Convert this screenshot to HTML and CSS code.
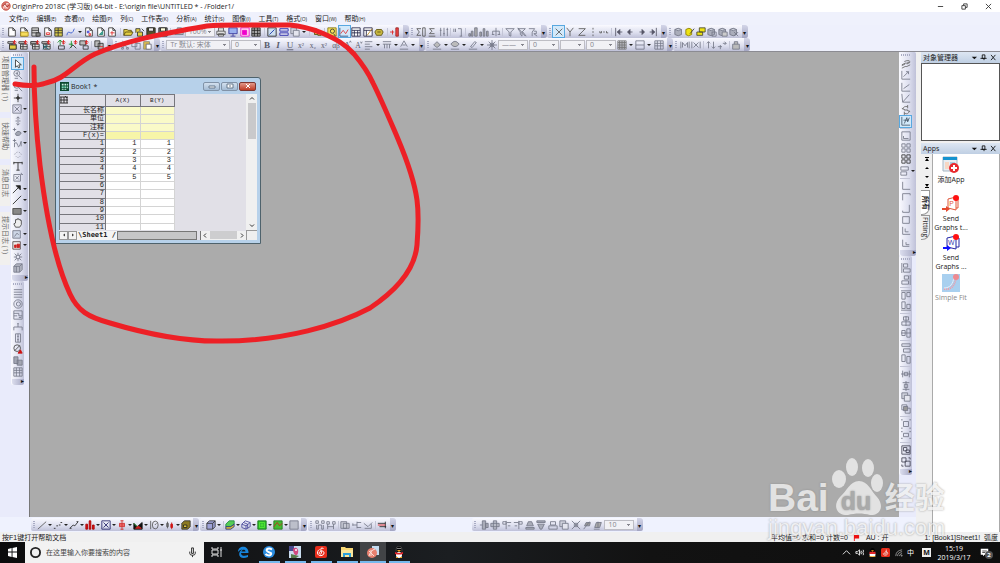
FILE: index.html
```html
<!DOCTYPE html>
<html lang="zh-CN">
<head>
  <meta charset="UTF-8" />
  <title>OriginPro 2018C</title>
  <link rel="stylesheet" href="styles.css">
</head>
<body>
  <header class="titlebar">
    <svg class="app-icon" viewBox="0 0 12 12"><circle cx="6" cy="6" r="5" fill="#e88a80" stroke="#b8352c"/><path d="M3 9c1-4 3-6 6-6M4 5l4 4M6 3v6" stroke="#fff" fill="none"/><path d="M2 6l3-3 2 4 3-2" stroke="#9c2820" fill="none"/></svg>
    <h1>OriginPro 2018C (学习版) 64-bit - E:\origin file\UNTITLED * - /Folder1/</h1>
    <div class="window-buttons">
      <button aria-label="Minimize"><svg viewBox="0 0 8 8"><path d="M1 4h6"/></svg></button>
      <button aria-label="Restore"><svg viewBox="0 0 8 8"><path d="M1 3h4v4H1zM3 3V1h4v4H5"/></svg></button>
      <button aria-label="Close"><svg viewBox="0 0 8 8"><path d="M1 1l6 6M7 1L1 7"/></svg></button>
    </div>
  </header>

  <nav class="menu">
    <a href="#">文件<small>(F)</small></a>
    <a href="#">编辑<small>(E)</small></a>
    <a href="#">查看<small>(V)</small></a>
    <a href="#">绘图<small>(P)</small></a>
    <a href="#">列<small>(C)</small></a>
    <a href="#">工作表<small>(K)</small></a>
    <a href="#">分析<small>(A)</small></a>
    <a href="#">统计<small>(S)</small></a>
    <a href="#">图像<small>(I)</small></a>
    <a href="#">工具<small>(T)</small></a>
    <a href="#">格式<small>(O)</small></a>
    <a href="#">窗口<small>(W)</small></a>
    <a href="#">帮助<small>(H)</small></a>
  </nav>

  <div class="bar-row">
    <div class="toolbar t-standard">
      <span class="icons" data-icons="page folder-page book page-red sheet curve+ page-multi page-green page-plus | open open-box save save-as | printer-dim"></span>
      <select class="zoom" aria-label="缩放"><option>100%</option></select>
      <span class="icons" data-icons="printer screen pink film | edit-win rows dup+ | tree | find chart* table table-edit gear | add-col"></span>
    </div>
    <div class="toolbar t-column">
      <span class="icons" data-icons="sum-col sum sliders | num | bars-up bars tree-dim | funnel funnel-x funnel-r"></span>
    </div>
    <div class="toolbar t-plot">
      <span class="icons" data-icons="X* Y Z dots dash | first prev next last"></span>
    </div>
    <div class="toolbar t-db">
      <span class="icons" data-icons="db-dim db-edit db-open db-grid db-save db-x"></span>
    </div>
  </div>

  <div class="bar-row second">
    <div class="toolbar t-import">
      <span class="icons" data-icons="imp-folder imp-1 imp-2 imp-x | imp-g1 imp-g2 imp-g3 | imp-copy"></span>
    </div>
    <div class="toolbar t-edit">
      <span class="icons" data-icons="cut copy paste"></span>
    </div>
    <div class="toolbar t-format">
      <select class="font" aria-label="字体"><option>Tr 默认: 宋体</option></select>
      <select class="size" aria-label="字号"><option>0</option></select>
      <span class="icons" data-icons="B I U sup subs supsub greek bigA smallA align+ merge+ colorA+"></span>
    </div>
    <div class="toolbar t-style">
      <span class="icons" data-icons="bucket+ palette+ pen+ sun"></span>
      <select class="line" aria-label="线型"><option>——</option></select>
      <select class="size" aria-label="线宽"><option>0</option></select>
      <select class="pattern" aria-label="图案"><option></option></select>
      <select class="size" aria-label="图案宽度"><option>0</option></select>
      <span class="icons" data-icons="fillgrid+ border+ grid"></span>
    </div>
    <div class="toolbar t-mask">
      <span class="icons" data-icons="mask mask-x | swap swap-h | lock"></span>
    </div>
  </div>

  <main class="body">
    <div class="dock">
      <div class="middle">
        <aside class="side-tabs">
          <button class="tall">项目管理器 (1)</button>
          <button>快速帮助</button>
          <button>消息日志</button>
          <button class="mid">提示日志 (1)</button>
        </aside>
        <div class="left-tools">
          <div class="toolbar vertical v-tools">
            <span class="icons" data-icons="pointer* zoomin zoomout cross mask-box+ vcross blob+ wave+ dotsel text region arrow+ line+ rect+ hand pic+ pic-red+ burst cube"></span>
          </div>
          <div class="toolbar vertical v-tools2">
            <span class="icons" data-icons="lines ring layout bracket axis no-red stack grid"></span>
          </div>
        </div>

        <section class="workspace">
          <article class="book">
            <div class="book-title">
              <svg class="book-icon" viewBox="0 0 10 10"><path d="M0 0h10v10H0z" fill="#0c4a30"/><path d="M2 2h2v2H2zM5 2h2v2H5zM8 2h1v2H8zM2 5h2v2H2zM5 5h2v2H5zM8 5h1v2H8zM2 8h2v1H2zM5 8h2v1H5z" fill="#c8f4e4"/><path d="M2 5h5v1H2z" fill="#25a878"/></svg>
              <h2>Book1 *</h2>
              <div class="book-buttons">
                <button aria-label="Minimize book"><svg viewBox="0 0 8 6"><path d="M1 3h6v2H1z"/></svg></button>
                <button aria-label="Maximize book"><svg viewBox="0 0 8 6"><path d="M1 1h6v4H1zM3 3h2"/></svg></button>
                <button class="close" aria-label="Close book"><svg viewBox="0 0 8 6"><path d="M2 1l4 4M6 1L2 5"/></svg></button>
              </div>
            </div>
            <div class="book-body">
              <div class="sheet">
                <table>
                  <thead>
                    <tr><th class="corner"><svg viewBox="0 0 8 8"><path d="M0 1h8M0 4h8M0 7h8M1 1v6M4 1v6M7 1v6M5 0l2 2"/></svg></th><th>A(X)</th><th>B(Y)</th></tr>
                  </thead>
                  <tbody>
                    <tr class="meta"><th>长名称</th><td></td><td></td></tr>
                    <tr class="meta"><th>单位</th><td></td><td></td></tr>
                    <tr class="meta"><th>注释</th><td></td><td></td></tr>
                    <tr class="meta formula"><th>F(x)=</th><td></td><td></td></tr>
                    <tr><th>1</th><td>1</td><td>1</td></tr>
                    <tr><th>2</th><td>2</td><td>2</td></tr>
                    <tr><th>3</th><td>3</td><td>3</td></tr>
                    <tr><th>4</th><td>4</td><td>4</td></tr>
                    <tr><th>5</th><td>5</td><td>5</td></tr>
                    <tr><th>6</th><td></td><td></td></tr>
                    <tr><th>7</th><td></td><td></td></tr>
                    <tr><th>8</th><td></td><td></td></tr>
                    <tr><th>9</th><td></td><td></td></tr>
                    <tr><th>10</th><td></td><td></td></tr>
                    <tr><th>11</th><td></td><td></td></tr>
                  </tbody>
                </table>
                <div class="vscroll">
                  <svg viewBox="0 0 8 8"><path d="M2 5l2-2 2 2"/></svg>
                  <span class="thumb"></span>
                  <svg class="down" viewBox="0 0 8 8"><path d="M2 3l2 2 2-2"/></svg>
                </div>
              </div>
              <div class="sheet-tabs">
                <button aria-label="Previous sheet"><svg viewBox="0 0 8 8"><path d="M5 2L3 4l2 2z"/></svg></button>
                <button aria-label="Next sheet"><svg viewBox="0 0 8 8"><path d="M3 2l2 2-2 2z"/></svg></button>
                <span class="tab">\Sheet1 /</span>
                <span class="filler"></span>
                <div class="hscroll">
                  <svg viewBox="0 0 8 8"><path d="M5 2L3 4l2 2"/></svg>
                  <span class="thumb"></span>
                  <svg viewBox="0 0 8 8"><path d="M3 2l2 2-2 2"/></svg>
                </div>
                <span class="resize"></span>
              </div>
            </div>
          </article>
        </section>

        <div class="right-tools">
          <div class="toolbar vertical v-graph">
            <span class="icons" data-icons="slashes axes1 axes2 axes3 recycle rescale* | layer1 layer4 layer4b layer-add+ | ax-l ax-t ax-r ax-box ax-in ax-in2"></span>
          </div>
          <div class="toolbar vertical v-align">
            <span class="icons" data-icons="al-l al-r | al-t al-b | al-h al-v | same-w same-h | dist-h dist-v front back | group ungroup | sel1 sel2"></span>
          </div>
        </div>
      </div>

      <div class="bottom">
        <div class="toolbar b-2d">
          <span class="icons" data-icons="line-g+ scatter+ linesym+ column+ multi+ box+ area+ polar+ stock+ template"></span>
        </div>
        <div class="toolbar b-3d">
          <span class="icons" data-icons="cube3d+ | surf+ wire+ contour+ image+ profile"></span>
        </div>
        <div class="toolbar b-mask">
          <span class="icons" data-icons="mask-pts mask-pts2 | mask-db node1 node2 | node-red"></span>
        </div>
        <div class="toolbar b-arrange">
          <span class="icons" data-icons="ar-1 ar-2 ar-3 ar-4 ar-5 ar-6 ar-7 front ar-8 rot1 rot2"></span>
          <select class="size" aria-label="角度"><option>10</option></select>
        </div>
      </div>
    </div>

    <aside class="panels">
      <section class="panel">
        <h3>对象管理器<svg viewBox="0 0 30 8"><path d="M1 3h6L4 6z" fill="#111"/><path d="M13 1h3v4h-3zM11 5h7M15 5v2M23 1l5 6M28 1l-5 6" stroke="#111" fill="none"/></svg></h3>
        <div class="objects"></div>
      </section>
      <section class="panel apps">
        <h3>Apps<svg viewBox="0 0 30 8"><path d="M1 3h6L4 6z" fill="#111"/><path d="M13 1h3v4h-3zM11 5h7M15 5v2M23 1l5 6M28 1l-5 6" stroke="#111" fill="none"/></svg></h3>
        <div class="apps-body">
          <div class="apps-tabs">
            <button aria-label="Top"><svg viewBox="0 0 6 6"><path d="M1 1h4v1H1zM3 2l2 3H1z"/></svg></button>
            <button aria-label="Up"><svg viewBox="0 0 6 6"><path d="M3 2l2 2H1z"/></svg></button>
            <button aria-label="Down"><svg viewBox="0 0 6 6"><path d="M3 4L1 2h4z"/></svg></button>
            <button aria-label="Bottom"><svg viewBox="0 0 6 6"><path d="M1 5h4V4H1zM3 4L1 1h4z"/></svg></button>
            <a class="vtab current" href="#">所有</a>
            <a class="vtab" href="#">Fitting</a>
          </div>
          <div class="app-list">
            <a href="#">
              <svg viewBox="0 0 18 18"><path d="M1 1h14v14H1z" fill="#e7eef3" stroke="#a7b7c3"/><path d="M1 1h14v3H1z" fill="#1593cf"/><path d="M3 6h4v7H3z" fill="#f7d7c4"/><path d="M8 6h5v3H8z" fill="#a8cfe2"/><circle cx="12" cy="12" r="5" fill="#e92a2f"/><path d="M9 12h6M12 9v6" stroke="#fff" stroke-width="2"/></svg>
              添加App
            </a>
            <a href="#">
              <svg viewBox="0 0 18 18"><path d="M6 4l8-2v13l-8-2zM14 4h2v9h-2" fill="#fff" stroke="#e0563a"/><text x="7" y="11" font-size="8" fill="#e0563a">P</text><circle cx="14" cy="3" r="3" fill="#f11"/><path d="M0 13h4v-2l4 3-4 3v-2H0z" fill="#e34a2f"/></svg>
              Send<br>Graphs t...
            </a>
            <a href="#">
              <svg viewBox="0 0 18 18"><path d="M5 4l9-2v13l-9-2zM14 4h3v9h-3" fill="#fff" stroke="#2528a6"/><text x="6" y="11" font-size="7" fill="#2528a6">W</text><circle cx="14" cy="3" r="3" fill="#f11"/><path d="M1 13h4v-2l4 3-4 3v-2H1z" fill="#11f"/></svg>
              Send<br>Graphs ...
            </a>
            <a href="#" class="dim">
              <svg viewBox="0 0 18 18"><path d="M0 0h18v18H0z" fill="#a9d0ef"/><path d="M2 15c7 1 11-3 12-12" fill="none" stroke="#f49aa4" stroke-width="2" stroke-dasharray="1 1"/><path d="M2 14c6 0 9-4 10-11" fill="none" stroke="#e5eef8"/><circle cx="14" cy="3" r="3" fill="#ee8a91"/></svg>
              Simple Fit
            </a>
          </div>
        </div>
      </section>
    </aside>
  </main>

  <footer class="status">
    <span class="help">按F1键打开帮助文档</span>
    <span>平均值=0 求和=0 计数=0</span>
    <svg viewBox="0 0 8 8"><path d="M1 1h6v4H2v3H1z" fill="#e11"/></svg>
    <span class="au">AU : 开</span>
    <span class="book-ref">1: [Book1]Sheet1!&nbsp; 弧度</span>
  </footer>

  <div class="taskbar">
    <button class="start" aria-label="开始"><svg viewBox="0 0 10 10"><path d="M0 1l4-1v4H0zM5 0l5-1v5H5zM0 5h4v5L0 9zM5 5h5v6l-5-1z"/></svg></button>
    <label class="search">
      <svg viewBox="0 0 12 12"><circle cx="6" cy="6" r="5" stroke-width="2"/></svg>
      <input type="text" placeholder="在这里输入你要搜索的内容" aria-label="搜索">
      <svg class="mic" viewBox="0 0 12 12"><path d="M5 1h2v6H5zM3 5v2q0 2 3 2t3-2V5M6 9v2"/></svg>
    </label>
    <div class="tasks">
      <button aria-label="任务视图"><svg viewBox="0 0 12 12"><path d="M1 1v2h6V1M1 11V9h6v2M1 4h6v4H1zM10 1v10M9 4h2" fill="none" stroke="#ddd"/></svg></button>
      <button aria-label="Edge"><svg viewBox="0 0 12 12"><path d="M1 6C1-1 12-1 11.500 7H4c0 3 4 3.500 7 2v2C5 13.500 1 11 2.500 6.500 3 5 4 4 5.500 3.500 3.500 3.500 2 4.500 1 6zM4.500 5.500H8.500C8.500 3 5 3 4.500 5.500z" fill="#1785dc"/></svg></button>
      <button class="open" aria-label="搜狗"><svg viewBox="0 0 12 12"><circle cx="6" cy="6" r="6" fill="#2b8de0"/><path d="M9 3.500C6 1.500 2.500 3 4 5s5 1 4 3.500C7 10 4 9.500 2.500 8" fill="none" stroke="#fff" stroke-width="2"/></svg></button>
      <button class="open" aria-label="照片"><svg viewBox="0 0 12 12"><path d="M0 0h12v12H0z" fill="#c9dcee"/><path d="M0 0h5v5H0z" fill="#4a4b8d"/><path d="M4 3c3-3 6 0 5 4s-5 2-5-4z" fill="#d24a80"/><path d="M2 8l8 2-3 2H2z" fill="#587a4a"/><circle cx="7" cy="4" r="1" fill="#fff"/></svg></button>
      <button class="open" aria-label="网易云音乐"><svg viewBox="0 0 12 12"><rect width="12" height="12" rx="2" fill="#e72d1b"/><path d="M7 2C5 2 6 4 6.500 7c-.5 2-3 1-2-.8S9 4.500 9 7c0 3-6 4-6.500 0 0-2 1-3 2-3.500M7 2l1.500.5" fill="none" stroke="#fff"/></svg></button>
      <button class="open" aria-label="文件资源管理器"><svg viewBox="0 0 12 12"><path d="M0 1h4l1 1h7v9H0z" fill="#f7d774"/><path d="M0 4h12v7H0z" fill="#fbe69b"/><path d="M2 7h8v4H8V9H4v2H2z" fill="#2aa0dc"/></svg></button>
      <button class="open current" aria-label="Origin"><svg viewBox="0 0 12 12"><path d="M5 0h7v9H5z" fill="#c4dcf0"/><circle cx="5" cy="7" r="5" fill="#e8806f"/><path d="M2 10c1-4 3-6 6-7M2 5l5 5M4 4v6" stroke="#fbe0da" fill="none"/></svg></button>
      <button class="open" aria-label="QQ"><svg viewBox="0 0 12 12"><ellipse cx="6" cy="4" rx="3" ry="4" fill="#000" stroke="#444"/><ellipse cx="6" cy="8" rx="4" ry="3" fill="#111"/><ellipse cx="6" cy="9" rx="3" ry="3" fill="#fff"/><path d="M2 6q4 2 8 0v2q-4 1-8 0z" fill="#e5252a"/><path d="M5 2v1M7 2v1" stroke="#fff"/><path d="M4 4h4L6 6zM3 11h2v1H3zM7 11h2v1H7z" fill="#f5a51d"/></svg></button>
    </div>
    <div class="tray">
      <svg viewBox="0 0 10 10"><path d="M1 7l4-4 4 4"/></svg>
      <svg viewBox="0 0 10 10"><path d="M1 4h2l2-2v6L3 6H1zM6 4q1 1 0 2M7 3q2 2 0 4M9 2q2 3 0 6"/></svg>
      <svg viewBox="0 0 12 12"><g stroke="none"><ellipse cx="6" cy="4" rx="3" ry="4" fill="#000"/><ellipse cx="6" cy="9" rx="4" ry="3" fill="#fff"/><path d="M2 5h8v3H2z" fill="#e5252a"/><path d="M4 3h4L6 5zM2 11h8v1H2z" fill="#f5a51d"/></g></svg>
      <svg viewBox="0 0 12 12"><rect x="0" y="0" width="12" height="12" rx="2" fill="#e72d1b" stroke="none"/><path d="M7 2v5c-.5 2-3 1-2-1s4-1 4 1c0 3-6 4-6 0"/></svg>
      <svg viewBox="0 0 10 10"><path d="M2 9q0-6 7-7M4 9q0-4 5-5M6 9q0-2 3-3M8 9V8h1v1z" stroke="#999"/></svg>
      <span>中</span>
      <span class="ime">M</span>
      <time>15:19<br>2019/3/17</time>
      <span class="notice"><svg viewBox="0 0 12 12"><path d="M1 1h10v8H6l-2 2V9H1z" fill="#fff" stroke="none"/><path d="M3 4h6M3 6h4" stroke="#222"/></svg><b>2</b></span>
    </div>
  </div>

  <svg class="mark" viewBox="0 0 1000 563" preserveAspectRatio="none">
    <path d="M15 84C26 86 38 86 46 83C66 79 74 64 95 54C125 41 160 34 207 26C218 25 228 25 240 25H290C303 26 312 29 322 33C336 39 345 44 354 54C364 66 369 74 373 83C382 101 389 118 398 139C406 158 414 178 417 200C419 215 418 232 417 245C415 268 397 290 370 308C338 325 285 341 222 341C180 342 140 332 110 323C88 317 78 311 70 294C55 262 46 215 40 165C36 130 34 100 34 67"/>
  </svg>

  <div class="watermark">
    <div class="logo">
      <span class="bai">Bai</span>
      <span class="paw"><svg viewBox="0 0 50 58"><ellipse cx="7" cy="22" rx="7" ry="9"/><ellipse cx="20" cy="10" rx="6" ry="9"/><ellipse cx="36" cy="11" rx="6" ry="9"/><ellipse cx="45" cy="26" rx="6" ry="9"/><path d="M27 24c9 0 12 10 18 16 8 9 3 19-7 18-7-2-15-2-22 0-11 1-16-9-8-18 7-6 10-16 19-16z"/></svg><b>du</b></span>
      <span class="jy">经验</span>
    </div>
    <div class="url">jingyan.baidu.com</div>
  </div>

  <script src="toolbars.js"></script>
</body>
</html>
```

FILE: styles.css
```css
* {
  box-sizing: border-box;
}
body {
  margin: 0;
  height: 100vh;
  display: flex;
  flex-direction: column;
  overflow: hidden;
  position: relative;
  background: #eef0fc;
  color: #222;
  font-family: "Open Sans", "Noto Sans CJK SC", sans-serif;
  font-size: 7px;
  line-height: 9px;
}
h1, h2, h3 {
  margin: 0;
  font-size: 7px;
  font-weight: normal;
}
a {
  color: inherit;
  text-decoration: none;
}
button {
  padding: 0;
  border: 0;
  background: none;
  color: inherit;
  font: inherit;
  display: flex;
  align-items: center;
  justify-content: center;
}
svg {
  display: block;
  flex: none;
}

/* title and menu */
.titlebar {
  display: flex;
  align-items: center;
  height: 12px;
  padding-left: 1px;
  background: #fff;
}
.app-icon {
  width: 10px;
  height: 10px;
  margin-right: 1px;
}
.titlebar h1 {
  flex: 1;
  white-space: nowrap;
}
.window-buttons {
  display: flex;
}
.window-buttons button {
  width: 24px;
  height: 12px;
}
.window-buttons svg {
  width: 7px;
  height: 7px;
  fill: none;
  stroke: #333;
}
.menu {
  display: flex;
  gap: 8px;
  height: 13px;
  padding-left: 9px;
  align-items: center;
  background: #eff1fc;
  white-space: nowrap;
}
.menu small {
  font-size: 5px;
}

/* toolbars */
.bar-row {
  display: flex;
  height: 13px;
}
.second {
  height: 14px;
  padding-bottom: 1px;
  border-bottom: 1px solid #8b8b92;
}
.toolbar {
  display: flex;
  align-items: center;
  justify-content: space-between;
  height: 13px;
  flex: none;
  color: #747787;
  background: linear-gradient(#fafaff, #dcdeee 60%, #bfc1d8);
  border-radius: 2px;
}
.toolbar::before {
  content: "";
  width: 2px;
  height: 8px;
  margin: 0 2px;
  background: repeating-linear-gradient(#a9acc4 0 1px, transparent 1px 2px);
}
.toolbar::after {
  content: "▾";
  width: 6px;
  height: 13px;
  margin-left: 2px;
  border-radius: 0 3px 3px 0;
  background: linear-gradient(#d3d5e8, #a3a5c2);
  color: #111;
  font-size: 6px;
  line-height: 16px;
  text-align: center;
}
.icons {
  display: contents;
}
.tool {
  width: 11px;
  height: 11px;
}
.tool svg {
  width: 10px;
  height: 10px;
  fill: none;
  stroke: currentColor;
  overflow: visible;
}
.tool.on {
  background: #d3e9fa;
  outline: 1px solid #58a8e0;
}
.tool.drop {
  width: 17px;
  justify-content: space-between;
}
.tool.drop::after {
  content: "";
  border: 2px solid transparent;
  border-top-color: #222;
  border-bottom: 0;
  margin-right: 1px;
}
.sep {
  width: 1px;
  height: 8px;
  margin: 0 1px;
  background: #c3c5d6;
}
.toolbar select {
  appearance: none;
  height: 10px;
  width: 30px;
  padding: 0 3px;
  border: 1px solid #bdbdc4;
  border-radius: 0;
  color: #85858d;
  background-color: #f1f1f5;
  background-image: linear-gradient(#85858d, #85858d), linear-gradient(#85858d, #85858d);
  background-repeat: no-repeat;
  background-size: 3px 1px, 1px 1px;
  background-position: right 3px top 3px, right 4px top 4px;
  font: 7px/8px "Open Sans", "Noto Sans CJK SC", sans-serif;
}
.toolbar .font {
  width: 64px;
}
.toolbar .pattern {
  width: 25px;
}
.t-standard { width: 409px; }
.t-column { width: 138px; }
.t-plot { width: 120px; }
.t-db { width: 81px; }
.t-import { width: 113px; }
.t-edit { width: 47px; }
.t-format { width: 265px; }
.t-style { width: 248px; }
.t-mask { width: 77px; }

.toolbar.vertical {
  flex-direction: column;
  align-items: flex-start;
  width: 17px;
  height: auto;
  padding-left: 1px;
  background: linear-gradient(to right, #fafaff, #dcdeee 60%, #bfc1d8);
}
.vertical::before {
  width: 10px;
  height: 2px;
  margin: 2px 1px;
  background: repeating-linear-gradient(to right, #a9acc4 0 1px, transparent 1px 2px);
}
.vertical::after {
  content: "▸";
  width: 100%;
  height: 6px;
  margin: 1px 0 0;
  border-radius: 0 0 3px 3px;
  background: linear-gradient(to right, #dcdeee, #a3a5c2);
  line-height: 5px;
  text-align: right;
}
.vertical .tool.drop {
  width: 16px;
}
.vertical .sep {
  width: 10px;
  height: 1px;
  margin: 1px 0;
}
.toolbar.v-tools { height: 229px; }
.toolbar.v-tools2 { height: 104px; width: 13px; }
.toolbar.v-graph { height: 204px; }
.toolbar.v-align { height: 219px; width: 13px; }
.left-tools {
  width: 19px;
  border-right: 1px solid #777;
}
.right-tools {
  width: 17px;
}

/* main area */
.body {
  display: flex;
  flex: 1;
  min-height: 0;
}
.dock {
  flex: 1;
  display: flex;
  flex-direction: column;
}
.middle {
  display: flex;
  flex: 1;
  min-height: 0;
  background: #e9ebfb;
}
.side-tabs {
  display: flex;
  flex-direction: column;
  gap: 6px;
  width: 11px;
}
.side-tabs button {
  justify-content: flex-start;
  width: 10px;
  height: 41px;
  padding-top: 4px;
  background: #f1f0ee;
  color: #666;
  writing-mode: vertical-rl;
  text-orientation: sideways;
  white-space: nowrap;
}
.side-tabs .tall {
  height: 60px;
}
.side-tabs .mid {
  height: 53px;
}
.workspace {
  flex: 1;
  position: relative;
  background: #ababab;
}
.bottom {
  display: flex;
  gap: 1px;
  height: 15px;
  padding: 1px 0 0 31px;
  background: #eff2fe;
}
.b-2d { width: 168px; }
.b-3d { width: 107px; }
.b-mask { width: 88px; }
.b-arrange { width: 171px; margin-left: 75px; }

/* workbook window */
.book {
  position: absolute;
  left: 25px;
  top: 25px;
  width: 206px;
  padding: 0 3px 3px;
  border: 1px solid #4e626c;
  border-radius: 3px 3px 0 0;
  background: #b7d1ea;
}
.book-title {
  display: flex;
  align-items: center;
  height: 16px;
  padding: 0 1px;
}
.book-icon {
  width: 9px;
  height: 9px;
  margin-right: 2px;
}
.book h2 {
  flex: 1;
}
.book-buttons {
  display: flex;
  gap: 1px;
}
.book-buttons button {
  width: 17px;
  height: 9px;
  border: 1px solid #8193a8;
  border-radius: 2px;
  background: linear-gradient(#d3e0ee, #a3bbd4);
}
.book-buttons .close {
  border-color: #7d3631;
  background: linear-gradient(#e29a8c, #c03a24);
}
.book-buttons svg {
  width: 8px;
  height: 6px;
  fill: #fff;
  stroke: #66788c;
}
.book-buttons .close svg {
  stroke: #fff;
}
.book-body {
  background: #e1e0e7;
}
.sheet {
  display: flex;
  justify-content: space-between;
  height: 136px;
  overflow: hidden;
}
table {
  width: 116px;
  height: 138px;
  table-layout: fixed;
  border-collapse: collapse;
  font: 7px/7px "Liberation Mono", "Noto Sans CJK SC", monospace;
}
th, td {
  padding: 0 3px 0 0;
  border: 1px solid #d4d4d4;
  background: #fff;
  text-align: right;
  white-space: nowrap;
}
th {
  padding-right: 1px;
  border-color: #76767c;
  background: #e1e0e7;
  font-weight: normal;
}
thead th {
  height: 12px;
  padding: 0;
  font-size: 6px;
  text-align: center;
}
.corner {
  width: 46px;
}
.corner svg {
  width: 8px;
  height: 8px;
  margin-bottom: 2px;
  fill: none;
  stroke: #333;
}
.meta td {
  background: #fafac8;
}
.formula td {
  background: #f7f5a8;
}
.vscroll {
  width: 11px;
  display: flex;
  flex-direction: column;
  align-items: center;
  background: #f0f0f0;
}
.vscroll svg, .hscroll svg {
  width: 8px;
  height: 9px;
  fill: none;
  stroke: #333;
}
.vscroll .thumb {
  width: 8px;
  height: 36px;
  background: #c9c9cb;
}
.vscroll .down {
  margin-top: auto;
}
.sheet-tabs {
  display: flex;
  align-items: center;
  height: 10px;
}
.sheet-tabs button {
  width: 9px;
  height: 9px;
  border: 1px solid #999;
  background: #f3f3f3;
}
.sheet-tabs button svg {
  width: 6px;
  height: 6px;
}
.tab {
  padding: 0 1px;
  font: bold 7px/9px "DejaVu Sans Mono", monospace;
  background: #f4f4f4;
}
.filler {
  flex: 1;
  height: 9px;
  border: 1px solid #777;
  background: #c6c6c8;
}
.hscroll {
  display: flex;
  align-items: center;
  gap: 1px;
  width: 46px;
  margin-left: 3px;
  border-left: 1px solid #777;
  background: #f0f0f0;
}
.hscroll .thumb {
  flex: 1;
  height: 8px;
  background: #cdcdcf;
}
.resize {
  width: 11px;
  height: 10px;
  border: 1px solid #999;
  border-width: 1px 0 0 1px;
  background: #efefef;
}

/* right side panels */
.panels {
  display: flex;
  flex-direction: column;
  gap: 2px;
  width: 84px;
  padding-left: 5px;
  background: #f0f0f0;
}
.panel h3 {
  display: flex;
  align-items: center;
  justify-content: space-between;
  height: 11px;
  padding: 0 2px;
  background: linear-gradient(#dde6f2, #bfcfe3);
}
.panel h3 svg {
  width: 28px;
  height: 7px;
}
.objects {
  height: 78px;
  border: 1px solid #555;
  background: #fff;
}
.apps {
  flex: 1;
  display: flex;
  flex-direction: column;
}
.apps-body {
  flex: 1;
  display: flex;
}
.apps-tabs {
  width: 11px;
}
.apps-tabs button {
  width: 11px;
  height: 9px;
}
.apps-tabs svg {
  width: 6px;
  height: 6px;
}
.vtab {
  display: block;
  width: 9px;
  height: 25px;
  border: 1px solid #999;
  border-left: 0;
  border-radius: 0 0 8px 0;
  writing-mode: vertical-rl;
  text-orientation: sideways;
  text-align: center;
  line-height: 8px;
}
.vtab.current {
  background: #fff;
  font-weight: bold;
}
.app-list {
  flex: 1;
  background: #fff;
  border: 1px solid #aaa;
  border-width: 0 1px;
  text-align: center;
  white-space: nowrap;
}
.app-list a {
  display: block;
  width: 36px;
  padding-top: 2px;
}
.app-list a:nth-child(2) {
  padding-top: 11px;
}
.app-list svg {
  width: 18px;
  height: 18px;
  margin: 0 auto 1px;
}
.app-list .dim {
  padding-top: 3px;
  color: #888;
}

/* status bar */
.status {
  display: flex;
  align-items: center;
  height: 10px;
  padding: 0 2px;
  background: #f0f0f0;
  font-family: "Liberation Sans", "Noto Sans CJK SC", sans-serif;
  white-space: nowrap;
}
.status .help {
  flex: 1;
}
.status svg {
  width: 7px;
  height: 7px;
  margin: 0 6px 0 5px;
}
.book-ref {
  margin-left: 36px;
}

/* windows taskbar */
.taskbar {
  display: flex;
  height: 21px;
  background: linear-gradient(to right, #0b0b0c, #1b1e21 45%, #121212 65%, #0e0e0e);
  color: #fff;
}
.start {
  width: 25px;
}
.start svg {
  width: 9px;
  height: 9px;
  fill: #fff;
  overflow: visible;
}
.search {
  display: flex;
  align-items: center;
  gap: 5px;
  width: 179px;
  padding: 0 6px 0 5px;
  background: #f2f2f2;
}
.search svg {
  width: 11px;
  height: 11px;
  fill: none;
  stroke: #222;
}
.search input {
  flex: 1;
  min-width: 0;
  padding: 0;
  border: 0;
  background: none;
  font: 7px/9px "Noto Sans CJK SC", sans-serif;
}
.search input::placeholder {
  color: #444;
}
.tasks {
  display: flex;
  flex: 1;
}
.tasks button {
  width: 26px;
  border-bottom: 2px solid transparent;
}
.tasks svg {
  width: 12px;
  height: 12px;
}
.tasks .open {
  background: linear-gradient(#76b9ed, #76b9ed) no-repeat center bottom / 21px 2px border-box;
}
.tasks .current {
  background-color: #424446;
  background-size: 26px 2px;
}
.tray {
  display: flex;
  align-items: center;
  gap: 4px;
  padding-right: 11px;
}
.tray svg {
  width: 9px;
  height: 9px;
  fill: none;
  stroke: #eee;
}
.ime {
  width: 9px;
  height: 9px;
  margin-left: 4px;
  background: #eee;
  color: #111;
  font-weight: bold;
  text-align: center;
}
.tray time {
  width: 38px;
  text-align: center;
}
.notice {
  position: relative;
  margin-left: 3px;
}
.notice b {
  position: absolute;
  left: 5px;
  top: 3px;
  width: 8px;
  height: 8px;
  border-radius: 4px;
  background: #555;
  font-size: 6px;
  line-height: 8px;
  text-align: center;
}

/* pen mark and watermark lie over the whole desktop */
.mark {
  position: absolute;
  inset: 0;
  width: 100%;
  height: 100%;
  fill: none;
  stroke: #ed2026;
  stroke-width: 5;
  stroke-linecap: round;
  pointer-events: none;
}
.watermark {
  position: absolute;
  right: 54px;
  bottom: 23px;
  width: 178px;
  opacity: .8;
  color: #f0f0f0;
  white-space: nowrap;
  text-shadow: 0 0 2px #888;
  pointer-events: none;
}
.logo {
  display: flex;
  align-items: flex-end;
  gap: 2px;
}
.bai {
  font: bold 39px/37px "Liberation Sans", sans-serif;
}
.paw {
  position: relative;
  margin-bottom: 1px;
}
.paw svg {
  width: 52px;
  height: 58px;
  fill: #f0f0f0;
}
.paw b {
  position: absolute;
  left: 10px;
  bottom: 1px;
  color: #aaa;
  font: bold 25px/25px "Liberation Sans", sans-serif;
}
.jy {
  font: bold 30px/41px "Noto Sans CJK SC", sans-serif;
}
.url {
  font: 22px/24px "Liberation Sans", sans-serif;
}
```

FILE: toolbars.js
```js
// path helpers, every icon lives on a 12x12 grid
const p = (d, stroke, fill) =>
  `<path d="${d}"${stroke ? ` stroke="${stroke}"` : ""}${fill ? ` fill="${fill}"` : ""}/>`;
const t = (s, size = 11, extra = "") =>
  `<text x="6" y="10" text-anchor="middle" stroke="none" fill="#5a5c6c" font-family="Liberation Serif" font-size="${size}" ${extra}>${s}</text>`;

const K = "#333";
const page = p("M2 1h5l3 3v7H2zM7 1v3h3", K, "#fff");
const grid = p("M1 1h10v10H1zM1 4h10M1 7h10M4 1v10M8 1v10");
const db = p("M1 3q4-3 8 0v6q-4 3-8 0zM1 3q4 3 8 0", "", "#aaadba");
const importBox = p("M1 2h7v2H1zM3 5h8v6H3zM3 8h8M6 5v6", K, "#ddd");
const redArrow = p("M7 2h4M9 0v5M7 3l2 2 2-2", "#d22");
const square = p("M1 1h7v7H1z", "", "#d0d2dd") + p("M4 4h7v7H4z", "", "#e4e5ee");
const cube = p("M1 4l3-3h7v7l-3 3H1zM1 4h7v7M8 4l3-3", K, "#9fa3d8");

const icons = {
  "page": page,
  "folder-page": page + p("M2 6h9v5H2z", "#a98e1c", "#f6dc5c"),
  "book": p("M1 1h8v10H1zM1 4h8M1 7h8", K, "#ccc") + p("M6 7h5v4H6z", K, "#888"),
  "page-red": page + p("M4 7h4v2H4z", "#d22"),
  "sheet": p("M1 1h9v10H1zM1 4h9M1 7h9M5 1v10", K, "#d8ca4a"),
  "curve": p("M1 10C3 0 6 14 10 2", "#35c"),
  "page-multi": page + p("M4 5h2v2H4z", "#22c") + p("M6 8h2v2H6z", "#d22"),
  "page-green": page + p("M4 9l4-4v4z", "#287", "#4a9"),
  "page-plus": page + p("M4 7h5M6 5v5", "#d22"),
  "open": p("M1 10V3h4l1 1h4v2M1 10l2-4h9l-2 4z", "#554a10", "#e3ce42"),
  "open-box": p("M1 7V2h5v3M3 11V6h6v5z", K, "#e3ce42") + p("M8 2l3 3", K),
  "save": p("M1 1h10v10H1z", "#222", "#55522a") + p("M3 1h6v4H3z", "#222", "#eee"),
  "save-as": p("M1 1h10v10H1z", "#222", "#777") + p("M3 1h6v4H3zM4 8h4", "#222", "#ffd"),
  "printer-dim": p("M1 5h10v4H1zM3 5l1-4h5l-1 4", "", "#bbb"),
  "printer": p("M1 5h10v4H1zM3 5V1h6v4M3 8h6v3H3z", "#555", "#ddd"),
  "screen": p("M1 1h10v7H1z", "#339", "#9ab0ee") + p("M6 8v3M3 11h6", "#339"),
  "pink": p("M1 1h10v10H1z", "#e0c", "#fde") + p("M3 4h5v5H3z", "#e0c", "#e0c"),
  "film": p("M1 1h10v10H1zM1 4h10M1 8h10M4 1v10M8 1v10", "#222", "#aaa"),
  "edit-win": p("M1 1h10v10H1z", "#222", "#cde") + p("M3 9l6-6", "#13a"),
  "rows": p("M1 2h10v3H1zM1 7h10v3H1z", "#22a", "#dde"),
  "dup": square,
  "tree": p("M1 2h4v3H1zM7 7h4v3H7zM3 5v4h4", "#554a10", "#e3ce42"),
  "find": p("M1 1h10v10H1z", "#887a10", "#f4e15a") + p("M4 5a2 2 0 1 0 5 0a2 2 0 1 0-5 0M8 8l2 3", K),
  "chart": p("M1 1v10h10", "#247") + p("M2 8l3-4 3 4 3-5", "#d33"),
  "table": p("M1 1h10v10H1zM1 4h10M1 7h10M4 4v7M8 4v7", "#224", "#fff"),
  "table-edit": p("M1 1h10v10H1zM1 4h10M4 4v7", "#224", "#fff") + p("M5 10l6-8", "#b82"),
  "gear": p("M1 6l2-3h6l2 3-2 4H3zM4 6h4", "#5c5210", "#c9b840"),
  "add-col": p("M0 6h5M3 4v5", "#d22") + p("M7 1h3v10H7z", "#922", "#e44"),
  "sum-col": p("M6 2H1l3 4-3 4h5M8 1h3v10H8z", "#555"),
  "sum": p("M9 2H3l3 3-3 3h6M2 11h8", "#555"),
  "sliders": p("M2 1v10M6 1v10M10 1v10M1 4h2M5 8h2M9 3h2"),
  "num": p("M1 2v4M3 2v4M6 2h4v9M8 11h3"),
  "bars-up": p("M1 11V8h2v3zM4 11V5h2v6zM8 11V1h3v10z", "", "#aaa"),
  "bars": p("M1 11V6h2v5zM5 11V2h2v9zM9 11V5h2v6z", "", "#aaa"),
  "tree-dim": p("M6 1v4M2 9V5h8v4M1 9h3M8 9h3M6 5v6"),
  "funnel": p("M1 2h10L7 6v5l-2-1V6z"),
  "funnel-x": p("M1 2h9L6 6v5L4 9V6zM7 6l4 5M1 1l9 10"),
  "funnel-r": p("M1 2h7L5 6v5M7 5h3v3H7l4 3"),
  "X": p("M2 2l8 8M10 2l-8 8", "#555"),
  "Y": p("M2 1l4 5 4-5M6 6v5", "#555"),
  "Z": p("M2 2h8l-8 8h8", "#555"),
  "dots": p("M6 1v2M6 5v2M6 9v2", "#555"),
  "dash": p("M1 5v2h2V5M5 6h2M9 5v2h2", "#555"),
  "first": p("M2 1v10M10 6H4M7 3L4 6l3 3z", "#556", "#556"),
  "prev": p("M9 6H4M6 3L3 6l3 3z", "#556", "#556"),
  "next": p("M3 6h5M6 3l3 3-3 3z", "#556", "#556"),
  "last": p("M10 1v10M2 6h6M5 3l3 3-3 3z", "#556", "#556"),
  "db-dim": db,
  "db-edit": p("M1 3q4-3 7 0v6q-4 3-7 0z", "#8a7c00", "#eee313") + p("M6 8l5-6", K),
  "db-open": p("M4 1h7v5H4zM1 6h7v4H1z", "#443", "#eee313"),
  "db-grid": db + p("M6 6h5v5H6z"),
  "db-save": db + p("M5 6h6v5H5z", "", "#ccc"),
  "db-x": db + p("M6 6l5 5M11 6l-5 5"),
  "imp-folder": importBox + p("M3 6h8v5H3z", K, "#e3ce42") + redArrow,
  "imp-1": importBox + redArrow,
  "imp-2": p("M1 2h8v4H1z", K, "#eee") + importBox + redArrow,
  "imp-x": importBox + p("M2 6l7 5M9 5l-7 6", "#186a7a") + redArrow,
  "imp-g1": p("M5 0v6M2 3l3-3 3 3", "#182") + p("M3 7h7v4H3z", K) + redArrow,
  "imp-g2": p("M1 5h5M4 1v8", "#182") + p("M2 10l4-4 4 4", K) + redArrow,
  "imp-g3": p("M1 1h7v5H1z", "#333", "#bbb") + p("M5 7h6v4H5z", "#333") + redArrow,
  "imp-copy": p("M1 1h6v7H1zM5 4h6v7H5z", K, "#bbb") + p("M7 8h4", "#d22"),
  "cut": p("M3 1l5 8M8 1L4 9M2 9h2v2H2zM8 9h2v2H8z"),
  "copy": p("M1 1h6v7H1zM5 4h6v7H5z"),
  "paste": p("M2 2h7v9H2z", "#887", "#d9b94c") + p("M5 5h6v6H5z", "#667", "#fff"),
  "B": t("B", 11, 'font-weight="bold"'),
  "I": t("I", 11, 'font-style="italic" font-weight="bold"'),
  "U": t("U", 11, 'text-decoration="underline"'),
  "sup": t("x²", 9),
  "subs": t("x₂", 9),
  "supsub": t("x²", 9),
  "greek": t("αβ", 9),
  "bigA": t("A", 11) + p("M9 3l1-2 1 2"),
  "smallA": t("A", 9) + p("M9 2l1 2 1-2"),
  "align": p("M1 2h9M1 5h6M1 8h9M1 11h6"),
  "merge": p("M1 2h10M1 5h10M3 5v5M6 5v5M9 5v5"),
  "colorA": p("M2 8l4-7 4 7M4 6h4M1 11h10"),
  "bucket": p("M2 6l4-4 4 4-4 3zM1 11h10", "", "#bbb"),
  "palette": p("M1 5q5-7 10 0-5 6-10 0M1 11h10", "", "#bbb"),
  "pen": p("M3 8l5-6 2 1-5 6zM1 11h10"),
  "sun": p("M6 0v12M0 6h12M2 2l8 8M10 2l-8 8M4 4h4v4H4z"),
  "fillgrid": p("M1 1h10v10H1zM1 3h10M1 5h10M1 7h10M1 9h10M3 1v10M5 1v10M7 1v10M9 1v10", "#777"),
  "border": p("M1 6h10") + p("M1 1h10v10H1z"),
  "grid": grid,
  "mask": p("M1 2v8M11 2v8M3 9V3l3 4 3-4v6"),
  "mask-x": p("M1 2v8M11 2v8M3 3l6 6M9 3l-6 6"),
  "swap": p("M3 2v8M1 4l2-2 2 2M9 10V2M7 8l2 2 2-2"),
  "swap-h": p("M1 8h5M4 6v5M7 4h4M9 2l2 2-2 2"),
  "lock": p("M2 5h8v6H2zM4 5V2h4v3", "", "#bbb"),
  "pointer": p("M3 1v9l2-2 2 3 1-1-1-3h3z", K, "#fff"),
  "zoomin": p("M1 4a3 3 0 1 0 7 0a3 3 0 1 0-7 0M7 7l4 4M3 4h3M5 2v4M2 10h4"),
  "zoomout": p("M1 4a3 3 0 1 0 7 0a3 3 0 1 0-7 0M7 7l4 4M3 4h3M2 10h4"),
  "cross": p("M6 1v10M1 6h10M4 6l2-2 2 2-2 2z", K, K),
  "mask-box": p("M1 1h10v10H1zM3 3l6 6M9 3l-6 6", "", "#dde"),
  "vcross": p("M6 1v4M6 7v4M4 3l2-2 2 2M4 9l2 2 2-2M3 6h6"),
  "blob": p("M1 3h4M3 1v4M4 8q3-5 7-1-1 4-6 3z", "", "#a3a6b3"),
  "wave": p("M1 3h4M3 1v4M3 11V6q3-2 4 3t4-5v6"),
  "dotsel": `<path d="M2 5q4-5 8 0-4 8-8 0" stroke-dasharray="1 2"/>`,
  "text": p("M1 2h10M6 2v9M4 11h4M1 1v3M11 1v3", "#222"),
  "region": p("M1 3h8v8H1zM3 5l4 4M7 5L3 9M10 1v2h2"),
  "arrow": p("M1 11L9 3M5 2h5v5z", "#222", "#222"),
  "line": p("M1 11L11 1", "#222"),
  "rect": p("M1 3h10v7H1z", "#444", "#888"),
  "hand": p("M3 11L1 7l2-1V2h2V1h2v1h2v1h1v5l-2 3z", "#444", "#eee"),
  "pic": p("M1 2h9v9H1zM3 9l3-4 2 2", "", "#cdd6e6"),
  "pic-red": p("M1 2h9v9H1z", "#544", "#eee") + p("M3 9V6h2v3zM6 9V5h3v4z", "#c22", "#c22"),
  "burst": p("M6 1v3M6 8v3M1 6h3M8 6h3M2 2l2 2M10 2L8 4M2 10l2-2M10 10L8 8M4 4h4v4H4z"),
  "cube": p("M1 4l3-3h7v7l-3 3H1zM1 4h7v7M8 4l3-3M4 4v7", "", "#b6b9c5"),
  "lines": p("M1 2h10M1 5h10M1 8h10M1 11h10"),
  "ring": p("M1 6a5 5 0 1 0 10 0a5 5 0 1 0-10 0M4 6a2 2 0 1 0 5 0a2 2 0 1 0-5 0"),
  "layout": p("M1 1h10v10H1zM1 4h6M1 7h4M7 4v3h4M7 9h3"),
  "bracket": p("M1 10V6h10v4M6 2v4M5 2h2"),
  "axis": p("M3 1h6v10H3zM5 4h2M5 8h2M6 1v10"),
  "no-red": p("M1 5a4 4 0 1 0 8 0a4 4 0 1 0-8 0M2 8l6-6", "#444") + p("M6 11l3-4 2 4z", "#c11", "#c11"),
  "stack": p("M1 1h5v8H1zM5 5h6v6H5z", "", "#a3a6b3"),
  "slashes": p("M1 7l4-2h2l4-2M1 11l4-2h2l4-2M4 3l3-1h3M1 8l4-2M7 6l4-2", "#666"),
  "axes1": p("M1 1v10h10M3 8l6-6M6 2h3v3"),
  "axes2": p("M1 1v10h10M3 8l7-5"),
  "axes3": p("M1 1l1 10h9M2 11l8-9"),
  "recycle": p("M2 5q1-4 6-3M8 0v4M10 7q-1 5-6 3M4 8v4M4 6h4M1 4l4 2M7 6l4 2", "#666"),
  "rescale": p("M1 1v10h10", "#456") + p("M4 9l3-7 1 5 2-5M3 5h6", "#456"),
  "layer1": p("M1 1h10v10H1zM3 6v3h6"),
  "layer4": p("M1 1h4v4H1zM7 1h4v4H7zM1 7h4v4H1zM7 7h4v4H7z"),
  "layer4b": p("M1 1h4v4H1zM7 1h4v4H7zM1 7h4v4H1zM7 7h4v4H7z", K),
  "layer-add": p("M1 1h9v4H1zM1 7h7v4H1z"),
  "ax-l": p("M2 1v9h9"),
  "ax-t": p("M2 10V2h9v2"),
  "ax-r": p("M2 8v2h8V1"),
  "ax-box": p("M2 2h8v8H2z"),
  "ax-in": p("M2 1v9h9M5 3v4h4"),
  "ax-in2": p("M2 2v8h8M6 5v3h4"),
  "al-l": p("M1 0v12M3 1h5v4H3zM3 7h8v4H3z"),
  "al-r": p("M11 0v12M4 1h5v4H4zM1 7h8v4H1z"),
  "al-t": p("M0 1h12M1 3h4v8H1zM7 3h4v5H7z"),
  "al-b": p("M0 11h12M1 1h4v8H1zM7 4h4v5H7z"),
  "al-h": p("M6 0v12M3 1h6v4H3zM1 7h10v4H1z"),
  "al-v": p("M0 6h12M1 3h4v6H1zM7 1h4v10H7z"),
  "same-w": p("M1 1h10v3H1zM3 7h8v4H3z"),
  "same-h": p("M1 1h4v8H1zM7 3h4v8H7z"),
  "dist-h": p("M2 2v8M10 2v8M4 4h4v4H4zM0 6h12"),
  "dist-v": p("M2 2h8M2 10h8M4 4h4v4H4zM6 0v12"),
  "front": square,
  "back": p("M5 5h6v6H5zM1 1h6v6H1z") + p("M3 3h5v5H3z", "", "#999"),
  "group": p("M3 3h6v6H3zM0 1h2M10 1h2M0 11h2M10 11h2"),
  "ungroup": p("M3 4h6v4H3zM0 2h2M10 2h2M0 10h2M10 10h2"),
  "sel1": p("M1 1h10v10H1zM3 3h4v4H3zM6 6h4v3H6z", "#445"),
  "sel2": p("M1 1h5v5H1zM5 5h6v6H5zM1 9v2h2M9 1h2v2", "#445"),
  "line-g": p("M1 11L11 2", "#555"),
  "scatter": p("M1 10h2M4 7h2M7 6h2M9 3h2", "#222"),
  "linesym": p("M1 10l4-4 2 1 4-5", "#222") + p("M1 10h2M9 2h2", "#222"),
  "column": p("M1 11V5h2v6zM5 11V1h2v10zM9 11V6h2v5z", "#a00", "#d11"),
  "multi": p("M1 1h10v10H1zM3 9l6-6M3 3l6 6", "#226"),
  "box": p("M3 4h6v4H3zM6 0v12M4 1h4M4 11h4", "#c33", "#e66"),
  "area": p("M1 11V4l4 4 6-5v8z", "#111", "#111") + p("M3 10l3-3 4 3z", "#c22", "#c22") + p("M1 4l4 4", "#2a3"),
  "polar": p("M2 1v10M4 6a3 4 0 1 0 7 0a3 4 0 1 0-7 0M7 6l2-2", "#555"),
  "stock": p("M3 2v8M2 4h2v4H2z", "#555") + p("M8 3v8M7 5h2v4H7z", "#c11", "#d22"),
  "template": p("M1 4l3-3h7v7l-3 3H1z", "#333", "#8c7a22") + p("M3 6h4v3H3z", "#222", "#e0c73b"),
  "cube3d": cube,
  "surf": p("M1 5l4-4h6v4l-4 3H1z", "#284", "#5c5") + p("M1 8h6l4-3v3l-4 3H1z", "#238", "#db3"),
  "wire": p("M1 5l4-4 6 2v5l-5 3-5-2zM1 5l5 2 5-4M6 7v4M3 3l5 2v5", "#449"),
  "contour": p("M1 1h10v10H1z", "#171", "#3b3") + p("M3 3h6v6H3zM5 5h2v2H5z", "#5e3"),
  "image": p("M1 1h10v10H1z", "#272", "#4b3") + p("M1 8l4-5 3 4 3-3", "#c22"),
  "profile": p("M1 1h10v10H1z", "", "#bcbfca"),
  "mask-pts": p("M1 1h3v3H1zM8 1h3v3H8zM2 6v5h2V6M8 6v5h2V6M4 6h4"),
  "mask-pts2": p("M1 2h3v3H1zM8 2h3v3H8zM2 5v6M9 5v6M2 8h7"),
  "mask-db": p("M1 2h7v8H1zM4 4h7v6H4z", "", "#c8cad5"),
  "node1": p("M1 6h5M6 2v8M6 3h5M6 9h5M1 4v3"),
  "node2": p("M1 4l5 4 5-5M2 10h8M10 5v5"),
  "node-red": p("M1 4h9M3 8h8M10 2v8", "#222") + p("M1 6h9", "#d11"),
  "ar-1": p("M1 6h3M4 1h4v10H4zM8 4h3v5H8z", "", "#a9acb8"),
  "ar-2": p("M4 1h4v10H4zM1 4h10v4H1z", "", "#b9bcc7"),
  "ar-3": p("M1 2h4v3H1zM5 1v10M6 3h5M7 7h3"),
  "ar-4": p("M7 2h4v3H7zM7 1v10M1 3h5M2 7h3"),
  "ar-5": p("M4 2h4l2 5H2zM1 9h10v2H1z", "", "#a9acb8"),
  "ar-6": p("M1 1h10v2H1zM2 5h8l-3 6H5z", "", "#a9acb8"),
  "ar-7": p("M3 2h6v4H3zM1 7h10v4H1z"),
  "ar-8": p("M1 1l10 10M11 1L1 11M4 4h4v4H4z"),
  "rot1": p("M2 11L9 2M3 7h6l1-4H5z", "", "#999"),
  "rot2": p("M2 9l2-6h6L8 9zM1 11h7M6 2v7", "", "#aaa")
};

// "name*" is a pressed button, "name+" has a drop-down arrow, "|" is a divider
document.querySelectorAll("[data-icons]").forEach(set => {
  set.innerHTML = set.dataset.icons.split(" ").map(item => {
    if (item === "|") return '<i class="sep"></i>';
    const name = item.replace(/[*+]$/, "");
    const cls = "tool" + (item.endsWith("*") ? " on" : "") + (item.endsWith("+") ? " drop" : "");
    return `<button class="${cls}" aria-label="${name}"><svg viewBox="0 0 12 12">${icons[name]}</svg></button>`;
  }).join("");
});
```
